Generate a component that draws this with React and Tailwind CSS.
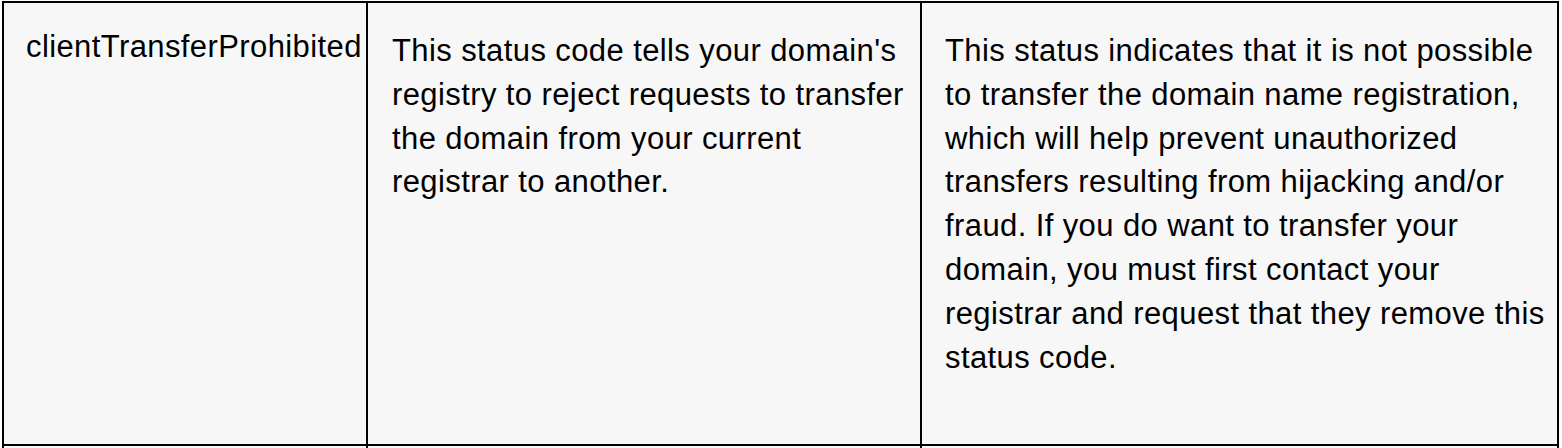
const row = {
  status: "clientTransferProhibited",
  meaning: [
    "This status code tells your domain's",
    "registry to reject requests to transfer",
    "the domain from your current",
    "registrar to another.",
  ],
  action: [
    "This status indicates that it is not possible",
    "to transfer the domain name registration,",
    "which will help prevent unauthorized",
    "transfers resulting from hijacking and/or",
    "fraud. If you do want to transfer your",
    "domain, you must first contact your",
    "registrar and request that they remove this",
    "status code.",
  ],
};

function Lines({ lines }) {
  return lines.map((line, i) => (
    <div key={i} className="whitespace-nowrap">
      {line}
    </div>
  ));
}

export default function App() {
  return (
    <div
      className="h-[448px] overflow-hidden bg-white pl-[2px] pt-[1px] text-[31px] leading-[43.8px] tracking-[0.4px] text-black"
      style={{ fontFamily: '"Liberation Sans", Arial, sans-serif' }}
    >
      <div className="w-[1557px]">
        <div className="flex h-[445px] border-2 border-black bg-[#f7f7f7]">
          <div className="w-[362px] shrink-0 pl-[22px] pt-[22px]">{row.status}</div>
          <div className="w-[554px] shrink-0 border-l-2 border-black pl-6 pt-[26px]">
            <Lines lines={row.meaning} />
          </div>
          <div className="flex-1 border-l-2 border-black pl-[23px] pt-[26px]">
            <Lines lines={row.action} />
          </div>
        </div>
        <div className="flex h-[40px] border-2 border-t-0 border-black bg-[#f7f7f7]">
          <div className="w-[362px] shrink-0" />
          <div className="w-[554px] shrink-0 border-l-2 border-black" />
          <div className="flex-1 border-l-2 border-black" />
        </div>
      </div>
    </div>
  );
}
